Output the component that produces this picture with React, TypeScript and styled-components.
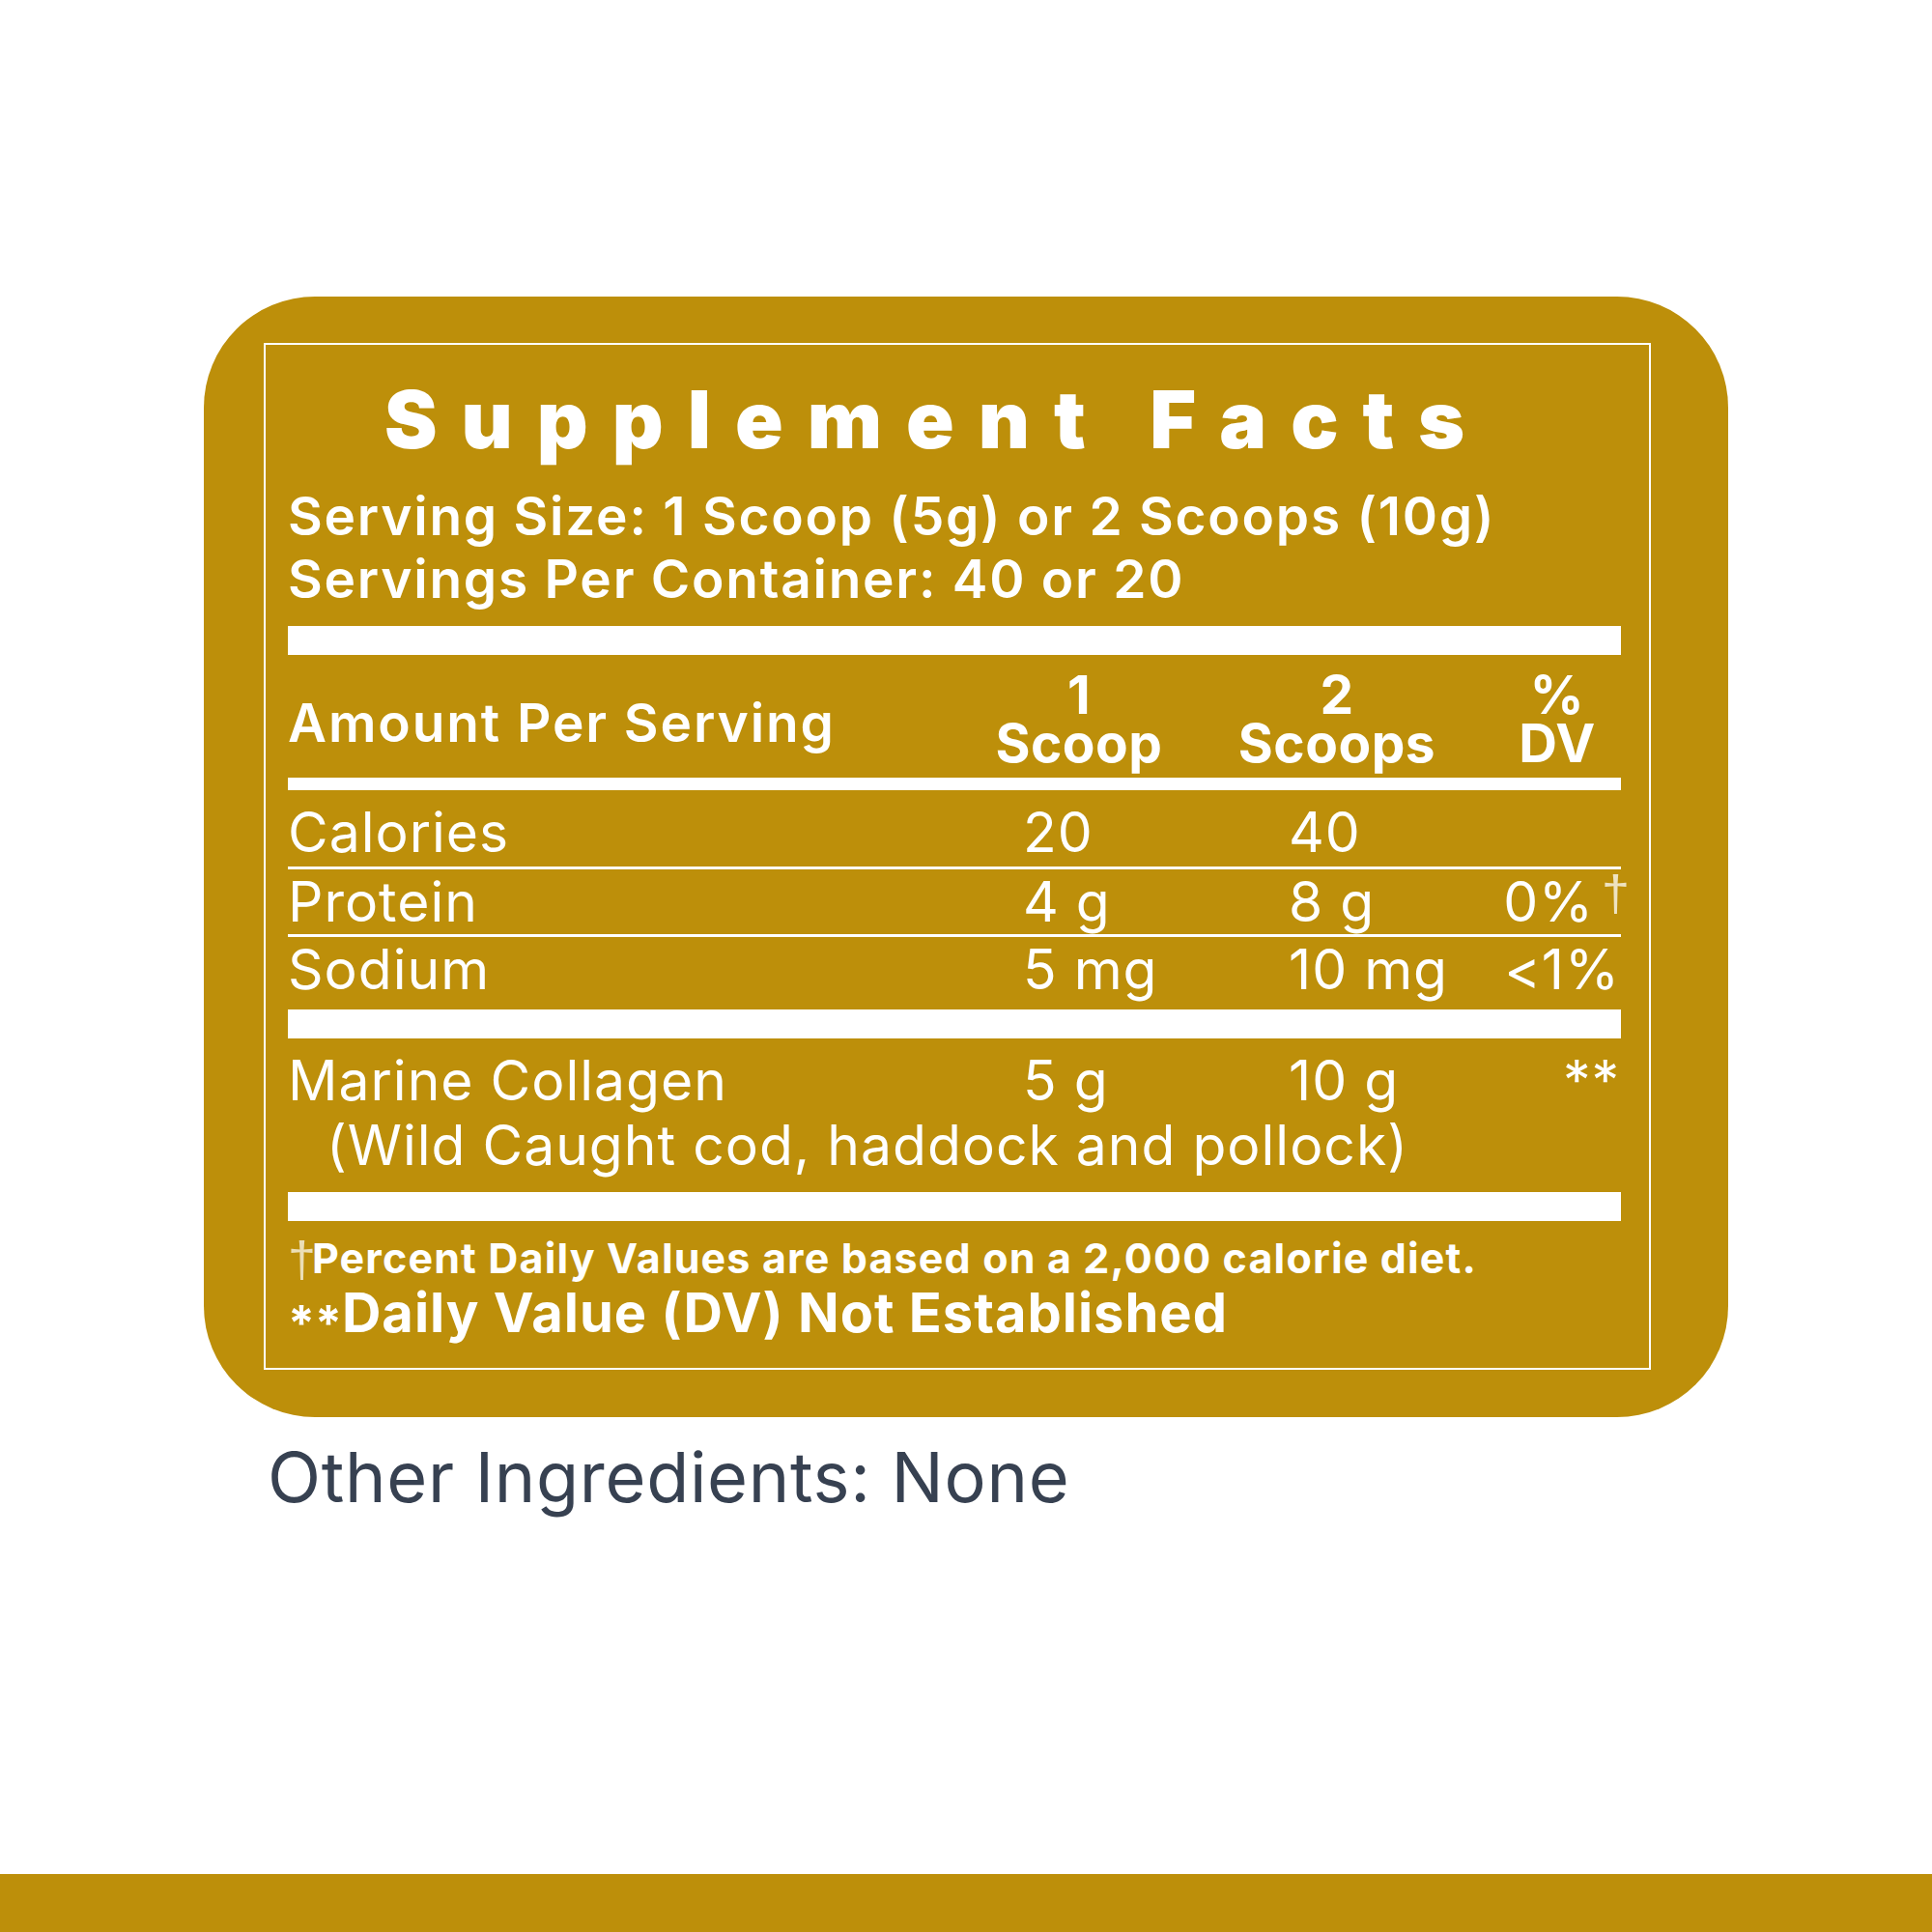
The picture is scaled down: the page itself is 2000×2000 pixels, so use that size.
import React from "react";
import styled, { createGlobalStyle } from "styled-components";

const GOLD = "#bd8f0a";

const Global = createGlobalStyle`
  html, body { margin: 0; padding: 0; background: #ffffff; }
  body { font-family: Inter, "Noto Sans", sans-serif; }
`;

const Page = styled.div`
  width: 2000px;
  min-height: 2000px;
  display: flex;
  flex-direction: column;
  align-items: center;
  background: #ffffff;
`;

const Card = styled.section`
  margin-top: 307px;
  width: 1578px;
  height: 1160px;
  box-sizing: border-box;
  background: ${GOLD};
  border-radius: 115px;
  padding: 48px 80px 49px 62px;
  display: flex;
`;

const Panel = styled.div`
  flex: 1;
  border: 2px solid #ffffff;
  padding: 0 29px 0 23px;
  display: flex;
  flex-direction: column;
  color: #ffffff;
`;

const Title = styled.h1`
  margin: 33px 0 0;
  padding-left: 100px;
  font-size: 82px;
  line-height: 90px;
  font-weight: 900;
  letter-spacing: 25px;
  white-space: nowrap;
`;

const ServingInfo = styled.div`
  margin-top: 22px;
  font-size: 55px;
  line-height: 65px;
  font-weight: 600;
  letter-spacing: 1.75px;
  white-space: nowrap;
`;

const Bar = styled.div<{ $h: number; $mt?: number }>`
  height: ${(p) => p.$h}px;
  margin-top: ${(p) => p.$mt ?? 0}px;
  background: #ffffff;
  flex: none;
`;

const Grid = styled.div<{ $pt?: number; $pb?: number }>`
  display: grid;
  grid-template-columns: 715px 208px 326px 130px;
  align-items: center;
  padding-top: ${(p) => p.$pt ?? 0}px;
  padding-bottom: ${(p) => p.$pb ?? 0}px;
`;

const HeaderLabel = styled.div`
  font-size: 55px;
  line-height: 50px;
  font-weight: 600;
  letter-spacing: 1.9px;
  padding-top: 8px;
  white-space: nowrap;
`;

const HeaderCol = styled.div`
  font-size: 55px;
  line-height: 50px;
  font-weight: 700;
  letter-spacing: 0.5px;
  text-align: center;
`;

const Cell = styled.div<{ $indent?: number; $right?: boolean }>`
  font-size: 57px;
  line-height: 67px;
  font-weight: 400;
  letter-spacing: 1px;
  white-space: nowrap;
  padding-left: ${(p) => p.$indent ?? 0}px;
  text-align: ${(p) => (p.$right ? "right" : "left")};
  align-self: start;
`;

const Divider = styled.div<{ $mt?: number }>`
  height: 3px;
  margin-top: ${(p) => p.$mt ?? 0}px;
  background: #ffffff;
`;

const Dagger = styled.span`
  font-family: "Liberation Sans", Arial, sans-serif;
  font-size: 52px;
  font-weight: 400;
  line-height: 0;
  letter-spacing: 0;
  vertical-align: 11px;
  margin-left: 8px;
  margin-right: -10px;
  color: rgba(255, 255, 255, 0.75);
`;

const Collagen = styled.div`
  padding: 10px 0 15px;
`;

const SourceNote = styled.div`
  padding-left: 40px;
  font-size: 57px;
  line-height: 67px;
  font-weight: 400;
  letter-spacing: 1px;
  white-space: nowrap;
`;

const FootSmall = styled.p`
  margin: 13px 0 0;
  font-size: 43px;
  line-height: 50px;
  font-weight: 700;
  letter-spacing: 1.15px;
  white-space: nowrap;
`;

const FootDagger = styled.span`
  font-family: "Liberation Sans", Arial, sans-serif;
  font-size: 52px;
  font-weight: 400;
  letter-spacing: -4px;
  vertical-align: -4px;
  line-height: 0;
  color: rgba(255, 255, 255, 0.7);
`;

const FootLarge = styled.p`
  margin: 1px 0 0;
  font-size: 56px;
  line-height: 63px;
  font-weight: 700;
  letter-spacing: 1px;
  white-space: nowrap;
`;

const Stars = styled.span`
  font-size: 50px;
  letter-spacing: 0;
  line-height: 0;
  vertical-align: -8px;
`;

const Other = styled.p`
  width: 1578px;
  box-sizing: border-box;
  margin: 19px 0 0;
  padding-left: 66px;
  font-size: 72px;
  line-height: 86px;
  font-weight: 400;
  letter-spacing: 0.7px;
  color: #374151;
`;

const FooterBand = styled.div`
  margin-top: auto;
  width: 100%;
  height: 60px;
  background: ${GOLD};
`;

type Row = { label: string; a: string; b: string; dv: React.ReactNode };

const rows: Row[] = [
  { label: "Calories", a: "20", b: "40", dv: "" },
  { label: "Protein", a: "4 g", b: "8 g", dv: (<>0%<Dagger>†</Dagger></>) },
  { label: "Sodium", a: "5 mg", b: "10 mg", dv: "<1%" },
];

export default function App() {
  return (
    <Page>
      <Global />
      <Card>
        <Panel>
          <Title>Supplement Facts</Title>
          <ServingInfo>
            Serving Size: 1 Scoop (5g) or 2 Scoops (10g)
            <br />
            Servings Per Container: 40 or 20
          </ServingInfo>
          <Bar $h={30} $mt={16} />
          <Grid $pt={16}>
            <HeaderLabel>Amount Per Serving</HeaderLabel>
            <HeaderCol>1<br />Scoop</HeaderCol>
            <HeaderCol>2<br />Scoops</HeaderCol>
            <HeaderCol>%<br />DV</HeaderCol>
          </Grid>
          <Bar $h={13} $mt={11} />
          {rows.map((r, i) => (
            <React.Fragment key={r.label}>
              <Grid $pt={i === 0 ? 10 : 0} $pb={i === rows.length - 1 ? 8 : 0}>
                <Cell>{r.label}</Cell>
                <Cell $indent={46}>{r.a}</Cell>
                <Cell $indent={113}>{r.b}</Cell>
                <Cell $right>{r.dv}</Cell>
              </Grid>
              {i < rows.length - 1 && <Divider $mt={i === 0 ? 2 : 0} />}
            </React.Fragment>
          ))}
          <Bar $h={30} />
          <Collagen>
            <Grid>
              <Cell>Marine Collagen</Cell>
              <Cell $indent={46}>5 g</Cell>
              <Cell $indent={113}>10 g</Cell>
              <Cell $right>**</Cell>
            </Grid>
            <SourceNote>(Wild Caught cod, haddock and pollock)</SourceNote>
          </Collagen>
          <Bar $h={30} />
          <FootSmall>
            <FootDagger>†</FootDagger>Percent Daily Values are based on a 2,000 calorie diet.
          </FootSmall>
          <FootLarge>
            <Stars>**</Stars>Daily Value (DV) Not Established
          </FootLarge>
        </Panel>
      </Card>
      <Other>Other Ingredients: None</Other>
      <FooterBand />
    </Page>
  );
}
